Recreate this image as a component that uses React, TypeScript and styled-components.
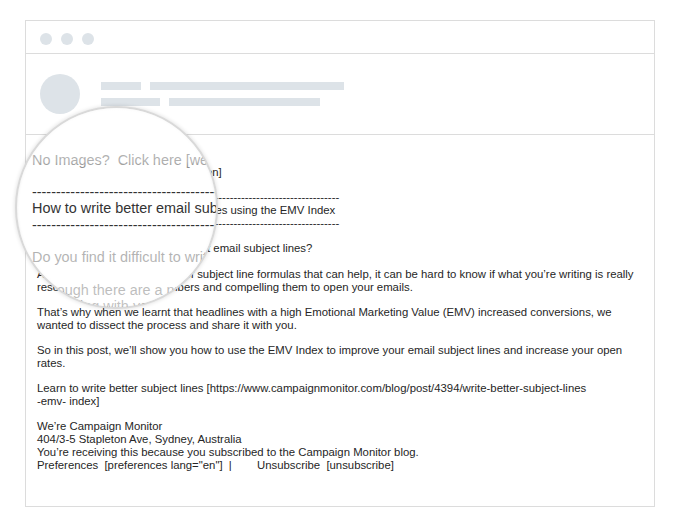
import React from "react";
import styled, { createGlobalStyle } from "styled-components";

const Global = createGlobalStyle`
  html, body { margin: 0; padding: 0; background: #ffffff; }
  body { font-family: "Liberation Sans", Arial, Helvetica, sans-serif; }
`;

const Page = styled.div`
  position: relative;
  width: 679px;
  height: 530px;
  padding: 20px 0 0 25px;
  box-sizing: border-box;
  overflow: hidden;
`;

const Window = styled.div`
  width: 630px;
  height: 487px;
  box-sizing: border-box;
  border: 1px solid #dcdcdc;
  display: flex;
  flex-direction: column;
`;

const TitleBar = styled.div`
  height: 33px;
  box-sizing: border-box;
  border-bottom: 1px solid #dcdcdc;
  display: flex;
  align-items: center;
  gap: 9px;
  padding: 4px 0 0 14px;
`;

const Dot = styled.span`
  width: 12px;
  height: 12px;
  border-radius: 50%;
  background: #dde3e8;
`;

const Header = styled.div`
  height: 81px;
  box-sizing: border-box;
  border-bottom: 1px solid #dcdcdc;
  display: flex;
  align-items: center;
  padding-left: 14px;
  gap: 21px;
`;

const Avatar = styled.div`
  width: 40px;
  height: 40px;
  border-radius: 50%;
  background: #dde3e8;
`;

const Bars = styled.div`
  display: flex;
  flex-direction: column;
  gap: 8px;
`;

const BarRow = styled.div`
  display: flex;
  gap: 9px;
`;

const Bar = styled.div<{ $w: number }>`
  width: ${(p) => p.$w}px;
  height: 8px;
  background: #dde3e8;
`;

const Body = styled.div`
  flex: 1;
  padding: 31px 0 0 11px;
`;

const TextBlock = styled.div<{ $lens?: boolean }>`
  font-family: "Liberation Sans", Arial, Helvetica, sans-serif;
  font-size: 11.35px;
  line-height: 13px;
  color: ${(p) => (p.$lens ? "#333333" : "#262626")};
  white-space: pre;
`;

const Para = styled.div`
  margin-bottom: 12.2px;
`;

const Line = styled.div``;

const Lens = styled.div`
  position: absolute;
  left: 15px;
  top: 106px;
  width: 203px;
  height: 203px;
  box-sizing: border-box;
  border-radius: 50%;
  border: 2px solid #d9d9d9;
  background: #ffffff;
  overflow: hidden;
  box-shadow: 0 0 4px rgba(0, 0, 0, 0.14), inset 0 0 3px rgba(0, 0, 0, 0.08);
`;

const LensFrame = styled.div`
  position: absolute;
  left: -17px;
  top: -108px;
  width: 679px;
  height: 530px;
  transform-origin: 55.6px 216px;
  transform: scale(1.27);
`;

const LensText = styled.div`
  position: absolute;
  left: 37px;
  top: 166px;
`;

const LensFade = styled.div`
  position: absolute;
  inset: 0;
  background: linear-gradient(
    to bottom,
    rgba(255, 255, 255, 0.62) 0%,
    rgba(255, 255, 255, 0.62) 27%,
    rgba(255, 255, 255, 0) 38%,
    rgba(255, 255, 255, 0) 60%,
    rgba(255, 255, 255, 0.62) 71%,
    rgba(255, 255, 255, 0.7) 100%
  );
`;

const dashes = "-".repeat(80);

const paragraphs: string[][] = [
  ["No Images?  Click here [webversion]"],
  [dashes, "How to write better email subject lines using the EMV Index", dashes],
  ["Do you find it difficult to write great email subject lines?"],
  [
    "Although there are a number of subject line formulas that can help, it can be hard to know if what you\u2019re writing is really",
    "resonating with your subscribers and compelling them to open your emails.",
  ],
  [
    "That\u2019s why when we learnt that headlines with a high Emotional Marketing Value (EMV) increased conversions, we",
    "wanted to dissect the process and share it with you.",
  ],
  [
    "So in this post, we\u2019ll show you how to use the EMV Index to improve your email subject lines and increase your open",
    "rates.",
  ],
  [
    "Learn to write better subject lines [https://www.campaignmonitor.com/blog/post/4394/write-better-subject-lines",
    "-emv- index]",
  ],
  [
    "We\u2019re Campaign Monitor",
    "404/3-5 Stapleton Ave, Sydney, Australia",
    "You\u2019re receiving this because you subscribed to the Campaign Monitor blog.",
    "Preferences  [preferences lang=\"en\"]  |        Unsubscribe  [unsubscribe]",
  ],
];

const EmailText: React.FC<{ lens?: boolean }> = ({ lens }) => (
  <TextBlock $lens={lens}>
    {paragraphs.map((p, i) => (
      <Para key={i}>
        {p.map((l, j) => (
          <Line key={j}>{l}</Line>
        ))}
      </Para>
    ))}
  </TextBlock>
);

export default function App() {
  return (
    <>
      <Global />
      <Page>
        <Window>
          <TitleBar>
            <Dot />
            <Dot />
            <Dot />
          </TitleBar>
          <Header>
            <Avatar />
            <Bars>
              <BarRow>
                <Bar $w={40} />
                <Bar $w={194} />
              </BarRow>
              <BarRow>
                <Bar $w={59} />
                <Bar $w={151} />
              </BarRow>
            </Bars>
          </Header>
          <Body>
            <EmailText />
          </Body>
        </Window>
        <Lens>
          <LensFrame>
            <LensText>
              <EmailText lens />
            </LensText>
          </LensFrame>
          <LensFade />
        </Lens>
      </Page>
    </>
  );
}
